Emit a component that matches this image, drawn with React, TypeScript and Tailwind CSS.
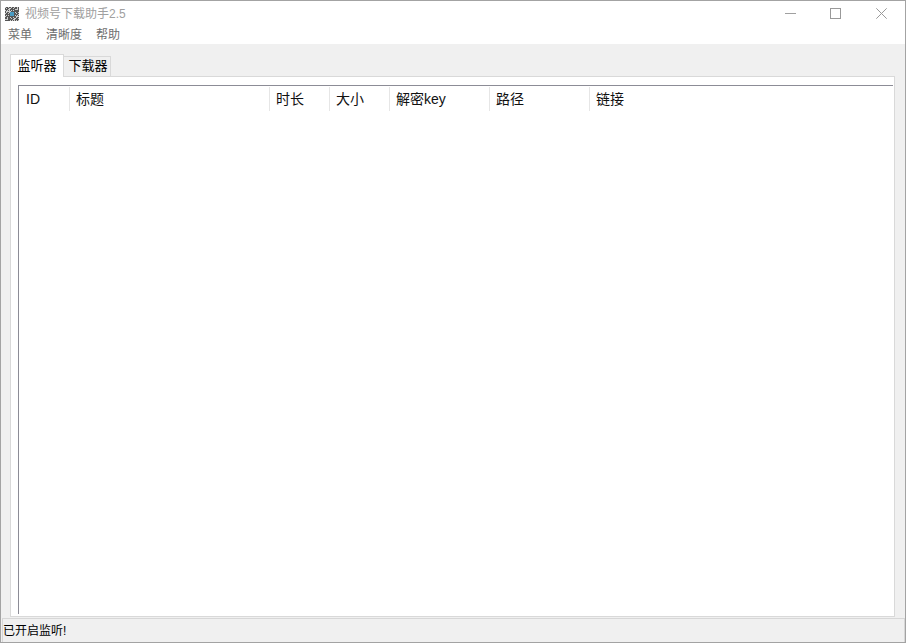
const FONT = "font-['Liberation_Sans','Noto_Sans_CJK_SC',sans-serif]";

const columns = [
  { label: "ID", width: "w-[51px]", pad: "pl-[7px]" },
  { label: "标题", width: "w-[200px]", pad: "pl-[6px]" },
  { label: "时长", width: "w-[60px]", pad: "pl-[6px]" },
  { label: "大小", width: "w-[60px]", pad: "pl-[6px]" },
  { label: "解密key", width: "w-[100px]", pad: "pl-[6px]" },
  { label: "路径", width: "w-[100px]", pad: "pl-[6px]" },
  { label: "链接", width: "w-[100px]", pad: "pl-[6px]" },
];

// small noisy square logo, same pattern each render
function Logo() {
  const cells = [];
  for (let y = 0; y < 14; y++) {
    for (let x = 0; x < 14; x++) {
      const on = (x * 7 + y * 13 + ((x * y) % 5)) % 3 !== 0;
      const mid = x > 4 && x < 9 && y > 4 && y < 9;
      cells.push(
        <rect
          key={`${x}-${y}`}
          x={x}
          y={y}
          width="1"
          height="1"
          fill={mid ? "#4a9cc4" : on ? "#565656" : "#cfcfcf"}
        />
      );
    }
  }
  return (
    <svg viewBox="0 0 14 14" className="w-[14px] h-[14px]" shapeRendering="crispEdges">
      {cells}
    </svg>
  );
}

function WindowButtons() {
  return (
    <div className="ml-auto flex items-center h-full">
      <div className="w-[46px] pl-[3px] flex justify-center">
        <svg width="11" height="11" viewBox="0 0 11 11" shapeRendering="crispEdges">
          <path d="M0 5.5H11" stroke="#a0a0a0" />
        </svg>
      </div>
      <div className="w-[46px] flex justify-center">
        <svg width="11" height="11" viewBox="0 0 11 11" shapeRendering="crispEdges">
          <rect x="0.5" y="0.5" width="10" height="10" fill="none" stroke="#999999" />
        </svg>
      </div>
      <div className="w-[46px] flex justify-center mr-[1px]">
        <svg width="11" height="11" viewBox="0 0 11 11">
          <path d="M0.3 0.3L10.7 10.7M10.7 0.3L0.3 10.7" stroke="#999999" strokeWidth="1" />
        </svg>
      </div>
    </div>
  );
}

export default function App() {
  return (
    <div className={`${FONT} w-[906px] h-[643px] flex flex-col bg-[#f0f0f0] border border-[#a3a3a3] overflow-hidden`}>
      <div className="h-[25px] flex items-center bg-white shrink-0">
        <div className="ml-[4px] mr-[6px]">
          <Logo />
        </div>
        <span className="text-[12px] text-[#a0a0a0]">视频号下载助手2.5</span>
        <WindowButtons />
      </div>
      <div className="h-[18px] flex items-center gap-[14px] pl-[7px] bg-white text-[12px] text-[#6e6e6e] shrink-0">
        <span>菜单</span>
        <span>清晰度</span>
        <span>帮助</span>
      </div>
      <div className="flex-1 flex flex-col pt-[10px] pl-[9px] pr-[10px] min-h-0">
        <div className="flex items-end h-[22px] shrink-0">
          <div className="h-[23px] w-[54px] -mb-px relative z-10 bg-white border border-b-0 border-[#d9d9d9] flex items-center justify-center text-[13px] text-black">
            监听器
          </div>
          <div className="h-[20px] w-[47px] pl-[2px] pb-[1px] bg-[#f0f0f0] border border-l-0 border-b-0 border-[#d9d9d9] flex items-center justify-center text-[13px] text-black">
            下载器
          </div>
        </div>
        <div className="flex-1 min-h-0 bg-white border border-[#d9d9d9] pt-[8px] pl-[7px] pr-[1px] pb-[2px]">
          <div className="h-full border-l border-t border-[#8c8c96]">
            <div className="flex h-[25px] pt-[1px]">
              {columns.map((c) => (
                <div
                  key={c.label}
                  className={`${c.width} ${c.pad} h-[24px] flex items-center border-r border-[#e6e6e6] last:border-r-0 text-[14px] text-[#111]`}
                >
                  {c.label}
                </div>
              ))}
            </div>
          </div>
        </div>
      </div>
      <div className="h-[24px] shrink-0 mt-[1px] ml-[1px] border-t border-l border-r border-[#d7d7d7] flex items-center text-[12px] text-black">
        已开启监听!
      </div>
    </div>
  );
}
